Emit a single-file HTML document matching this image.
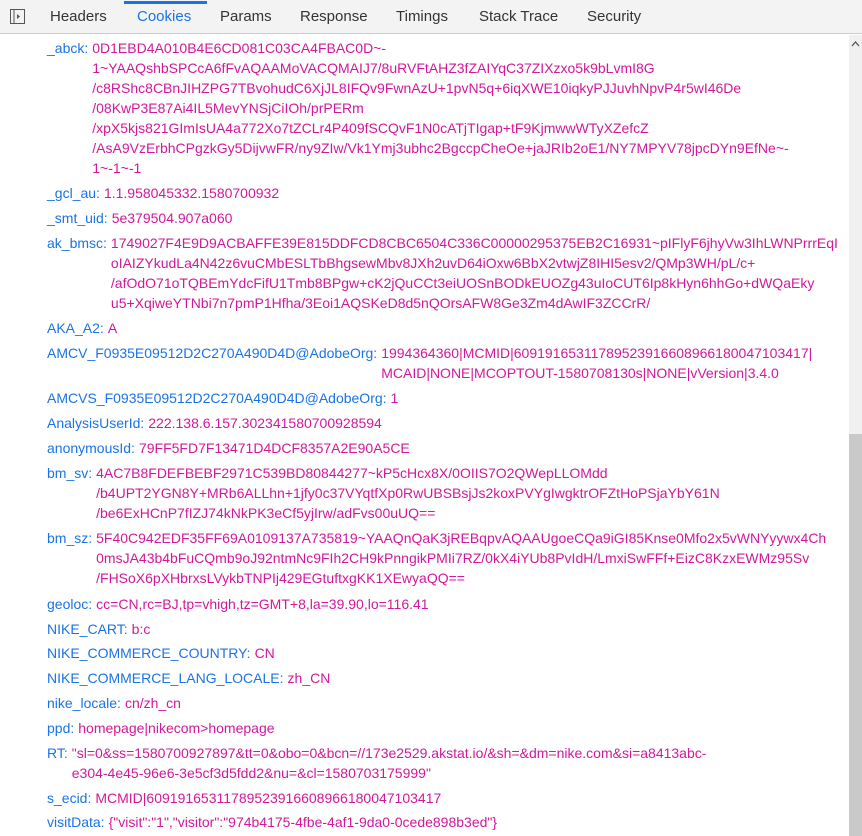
<!DOCTYPE html>
<html><head><meta charset="utf-8"><style>
body{margin:0;width:862px;height:836px;overflow:hidden;background:#fff;font-family:"Liberation Sans",sans-serif;position:relative}
.bar{position:absolute;left:0;top:0;width:862px;height:33px;background:#f3f3f3;border-bottom:1px solid #ccc}
.tab{position:absolute;top:8px;font-size:15px;color:#333}
.act{color:#1a73e8}
.ul{position:absolute;left:124px;top:1px;width:83px;height:3px;background:#1a73e8}
.e{position:absolute;left:47px;font-size:14px;line-height:20px;display:flex;white-space:nowrap}
.k{color:#1a73e8;margin-right:4px}
.v{color:#d1199b}
.sb{position:absolute;left:849px;top:35px;width:13px;height:801px;background:#f0f0f0}
.th{position:absolute;left:849px;top:434px;width:13px;height:402px;background:#c9c9c9}
</style></head><body>
<div class="bar">
<svg style="position:absolute;left:10px;top:9px" width="16" height="16"><rect x="0.5" y="0.5" width="14" height="14" fill="none" stroke="#555"/><line x1="4" y1="1" x2="4" y2="14" stroke="#555"/><path d="M7 5 L10 7.5 L7 10Z" fill="#555"/></svg>
<div class="ul"></div>
<span class="tab" style="left:50px">Headers</span>
<span class="tab act" style="left:137px">Cookies</span>
<span class="tab" style="left:220px">Params</span>
<span class="tab" style="left:300px">Response</span>
<span class="tab" style="left:396px">Timings</span>
<span class="tab" style="left:479px">Stack Trace</span>
<span class="tab" style="left:587px">Security</span>
</div>

<div class="e" style="top:38px"><span class="k">_abck:</span><span class="v">0D1EBD4A010B4E6CD081C03CA4FBAC0D~-<br>1~YAAQshbSPCcA6fFvAQAAMoVACQMAIJ7/8uRVFtAHZ3fZAIYqC37ZIXzxo5k9bLvmI8G<br>/c8RShc8CBnJIHZPG7TBvohudC6XjJL8IFQv9FwnAzU+1pvN5q+6iqXWE10iqkyPJJuvhNpvP4r5wI46De<br>/08KwP3E87Ai4IL5MevYNSjCiIOh/prPERm<br>/xpX5kjs821GImIsUA4a772Xo7tZCLr4P409fSCQvF1N0cATjTIgap+tF9KjmwwWTyXZefcZ<br>/AsA9VzErbhCPgzkGy5DijvwFR/ny9ZIw/Vk1Ymj3ubhc2BgccpCheOe+jaJRIb2oE1/NY7MPYV78jpcDYn9EfNe~-<br>1~-1~-1</span></div>
<div class="e" style="top:183px"><span class="k">_gcl_au:</span><span class="v">1.1.958045332.1580700932</span></div>
<div class="e" style="top:208px"><span class="k">_smt_uid:</span><span class="v">5e379504.907a060</span></div>
<div class="e" style="top:233px"><span class="k">ak_bmsc:</span><span class="v">1749027F4E9D9ACBAFFE39E815DDFCD8CBC6504C336C00000295375EB2C16931~pIFlyF6jhyVw3IhLWNPrrrEqI<br>oIAIZYkudLa4N42z6vuCMbESLTbBhgsewMbv8JXh2uvD64iOxw6BbX2vtwjZ8IHI5esv2/QMp3WH/pL/c+<br>/afOdO71oTQBEmYdcFifU1Tmb8BPgw+cK2jQuCCt3eiUOSnBODkEUOZg43uIoCUT6Ip8kHyn6hhGo+dWQaEky<br>u5+XqiweYTNbi7n7pmP1Hfha/3Eoi1AQSKeD8d5nQOrsAFW8Ge3Zm4dAwIF3ZCCrR/</span></div>
<div class="e" style="top:318px"><span class="k">AKA_A2:</span><span class="v">A</span></div>
<div class="e" style="top:343px"><span class="k">AMCV_F0935E09512D2C270A490D4D@AdobeOrg:</span><span class="v">1994364360|MCMID|60919165311789523916608966180047103417|<br>MCAID|NONE|MCOPTOUT-1580708130s|NONE|vVersion|3.4.0</span></div>
<div class="e" style="top:388px"><span class="k">AMCVS_F0935E09512D2C270A490D4D@AdobeOrg:</span><span class="v">1</span></div>
<div class="e" style="top:413px"><span class="k">AnalysisUserId:</span><span class="v">222.138.6.157.302341580700928594</span></div>
<div class="e" style="top:438px"><span class="k">anonymousId:</span><span class="v">79FF5FD7F13471D4DCF8357A2E90A5CE</span></div>
<div class="e" style="top:463px"><span class="k">bm_sv:</span><span class="v">4AC7B8FDEFBEBF2971C539BD80844277~kP5cHcx8X/0OIIS7O2QWepLLOMdd<br>/b4UPT2YGN8Y+MRb6ALLhn+1jfy0c37VYqtfXp0RwUBSBsjJs2koxPVYgIwgktrOFZtHoPSjaYbY61N<br>/be6ExHCnP7fIZJ74kNkPK3eCf5yjIrw/adFvs00uUQ==</span></div>
<div class="e" style="top:528px"><span class="k">bm_sz:</span><span class="v">5F40C942EDF35FF69A0109137A735819~YAAQnQaK3jREBqpvAQAAUgoeCQa9iGI85Knse0Mfo2x5vWNYyywx4Ch<br>0msJA43b4bFuCQmb9oJ92ntmNc9FIh2CH9kPnngikPMIi7RZ/0kX4iYUb8PvIdH/LmxiSwFFf+EizC8KzxEWMz95Sv<br>/FHSoX6pXHbrxsLVykbTNPIj429EGtuftxgKK1XEwyaQQ==</span></div>
<div class="e" style="top:594px"><span class="k">geoloc:</span><span class="v">cc=CN,rc=BJ,tp=vhigh,tz=GMT+8,la=39.90,lo=116.41</span></div>
<div class="e" style="top:619px"><span class="k">NIKE_CART:</span><span class="v">b:c</span></div>
<div class="e" style="top:643px"><span class="k">NIKE_COMMERCE_COUNTRY:</span><span class="v">CN</span></div>
<div class="e" style="top:668px"><span class="k">NIKE_COMMERCE_LANG_LOCALE:</span><span class="v">zh_CN</span></div>
<div class="e" style="top:693px"><span class="k">nike_locale:</span><span class="v">cn/zh_cn</span></div>
<div class="e" style="top:718px"><span class="k">ppd:</span><span class="v">homepage|nikecom&gt;homepage</span></div>
<div class="e" style="top:743px"><span class="k">RT:</span><span class="v">"sl=0&amp;ss=1580700927897&amp;tt=0&amp;obo=0&amp;bcn=//173e2529.akstat.io/&amp;sh=&amp;dm=nike.com&amp;si=a8413abc-<br>e304-4e45-96e6-3e5cf3d5fdd2&amp;nu=&amp;cl=1580703175999"</span></div>
<div class="e" style="top:788px"><span class="k">s_ecid:</span><span class="v">MCMID|60919165311789523916608966180047103417</span></div>
<div class="e" style="top:812px"><span class="k">visitData:</span><span class="v">{"visit":"1","visitor":"974b4175-4fbe-4af1-9da0-0cede898b3ed"}</span></div>
<div class="sb"></div><div class="th"></div>
<svg style="position:absolute;left:851px;top:40px" width="9" height="8"><path d="M1 6 L4.5 2 L8 6" fill="none" stroke="#555" stroke-width="1.3"/></svg>
</body></html>
